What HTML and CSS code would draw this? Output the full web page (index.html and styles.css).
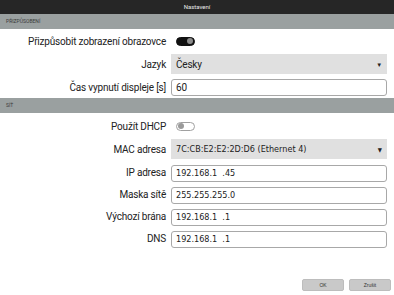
FILE: index.html
```html
<!DOCTYPE html>
<html lang="cs">
<head>
    <meta charset="UTF-8">
    <title>Nastavení</title>
    <link rel="stylesheet" href="styles.css">
</head>
<body>
<div id="window">
    <div class="titlebar">Nastavení</div>

    <div class="section-head">PŘIZPŮSOBENÍ</div>
    <div class="form first">
        <label class="lbl">Přizpůsobit zobrazení obrazovce</label>
        <div class="ctrl"><span class="toggle on"><span class="knob"></span></span></div>

        <label class="lbl">Jazyk</label>
        <div class="select"><span>Česky</span><span class="arrow">&#9660;</span></div>

        <label class="lbl">Čas vypnutí displeje [s]</label>
        <div class="input">60</div>
    </div>

    <div class="section-head">SÍŤ</div>
    <div class="form second">
        <label class="lbl">Použít DHCP</label>
        <div class="ctrl"><span class="toggle"><span class="knob"></span></span></div>

        <label class="lbl">MAC adresa</label>
        <div class="select net"><span>7C:CB:E2:E2:2D:D6 (Ethernet 4)</span><span class="arrow">&#9660;</span></div>

        <label class="lbl">IP adresa</label>
        <div class="input net">192.168.1  .45</div>

        <label class="lbl">Maska sítě</label>
        <div class="input net">255.255.255.0</div>

        <label class="lbl">Výchozí brána</label>
        <div class="input net">192.168.1  .1</div>

        <label class="lbl">DNS</label>
        <div class="input net">192.168.1  .1</div>
    </div>

    <div class="buttons">
        <button class="btn">OK</button>
        <button class="btn">Zrušit</button>
    </div>
</div>
</body>
</html>
```

FILE: styles.css
```css
* {
    padding: 0;
    margin: 0;
    box-sizing: border-box;
}
body {
    background: #ffffff;
    font-family: Roboto, "Liberation Sans", sans-serif;
    color: #222222;
}
#window {
    display: flex;
    flex-direction: column;
    height: 295px;
    width: 394px;
}
.titlebar {
    height: 14px;
    background-color: #262626;
    color: #e8e8e8;
    font-size: 6px;
    line-height: 14px;
    text-align: center;
}
.section-head {
    height: 15px;
    background-color: #9aa0a0;
    color: #3a3a3a;
    font-size: 5px;
    line-height: 15px;
    padding-left: 6px;
}
.form {
    display: grid;
    grid-template-columns: 166px 216px;
    column-gap: 5px;
    align-items: center;
}
.first {
    padding: 4px 0 2px 0;
    row-gap: 5px;
    grid-template-rows: 16px 20px 17px;
}
.second {
    padding: 5px 0 0 0;
    row-gap: 5px;
    grid-template-rows: 16px 20px 17px 17px 17px 17px;
}
.second .input {
    margin-top: 1px;
}
.lbl {
    text-align: right;
    font-size: 10px;
    letter-spacing: -0.2px;
}
.ctrl {
    display: flex;
    align-items: center;
    padding-left: 5px;
}
.toggle {
    display: flex;
    align-items: center;
    width: 19px;
    height: 9px;
    border-radius: 5px;
    border: 1px solid #a0a0a0;
    background: #ffffff;
    padding: 0 1px;
}
.toggle .knob {
    width: 6px;
    height: 6px;
    border-radius: 50%;
    background: #9a9a9a;
}
.toggle.on {
    background: #111111;
    border-color: #111111;
    justify-content: flex-end;
}
.toggle.on .knob {
    background: #8c8c8c;
}
.select {
    height: 20px;
    background: #e0e0e0;
    display: flex;
    align-items: center;
    justify-content: space-between;
    padding: 0 5px;
    font-size: 10px;
    letter-spacing: -0.2px;
}
.arrow {
    font-size: 6px;
    color: #222222;
}
.input {
    height: 17px;
    border: 1px solid #a8a8a8;
    border-radius: 3px;
    padding-left: 4px;
    font-size: 10px;
    line-height: 15px;
    white-space: pre;
}
.net {
    font-family: "DejaVu Sans Condensed", "Liberation Sans", sans-serif;
    font-size: 9px;
    letter-spacing: 0;
}
.buttons {
    margin-top: auto;
    display: flex;
    justify-content: flex-end;
    gap: 5px;
    padding: 0 3px 4px 0;
}
.btn {
    width: 42px;
    height: 12px;
    border: 1px solid #bdbdbd;
    border-radius: 2px;
    background: #c9c9c9;
    color: #333333;
    font-family: "Liberation Sans", sans-serif;
    font-size: 5px;
}
```
